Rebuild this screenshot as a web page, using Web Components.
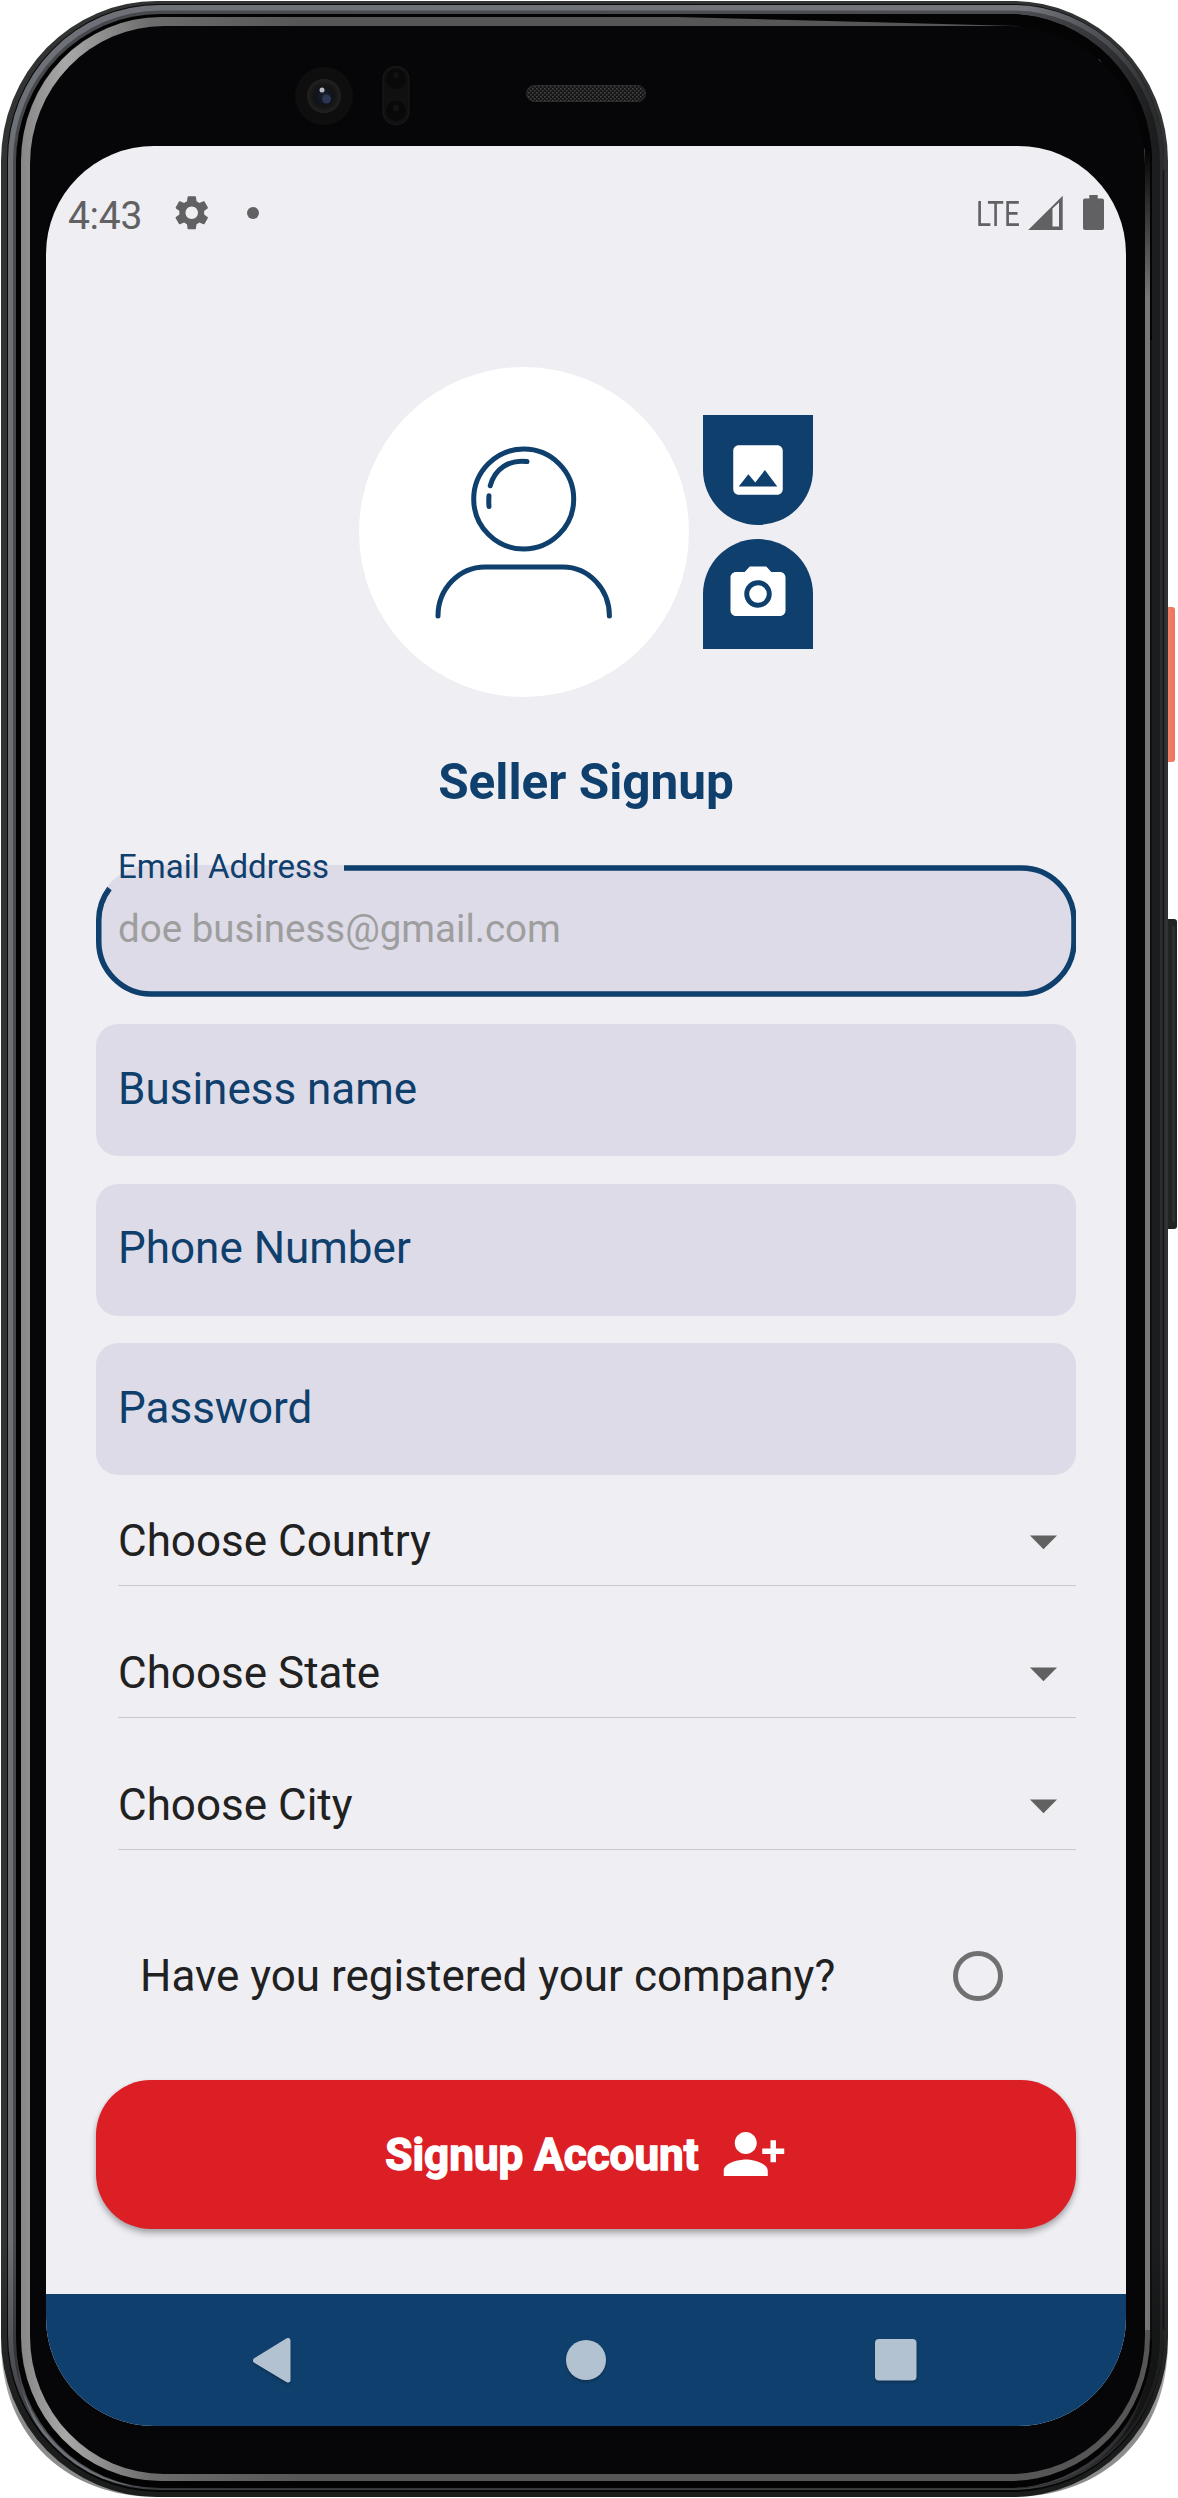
<!DOCTYPE html>
<html lang="en">
<head>
<meta charset="utf-8">
<title>Seller Signup</title>
<style>
html,body{margin:0;padding:0;background:#fff}
body{width:1178px;height:2498px;overflow:hidden;font-family:Roboto,"Liberation Sans",sans-serif}
</style>
</head>
<body>
<phone-frame>
  <status-bar time="4:43" network="LTE"></status-bar>
  <seller-form>
    <avatar-picker></avatar-picker>
    <form-title>Seller Signup</form-title>
    <text-field focused label="Email Address" style="--label-ls:0;--hint-ls:0">doe business@gmail.com</text-field>
    <text-field label="Business name"></text-field>
    <text-field label="Phone Number"></text-field>
    <text-field label="Password"></text-field>
    <select-group>
      <select-row>Choose Country</select-row>
      <select-row>Choose State</select-row>
      <select-row>Choose City</select-row>
    </select-group>
    <radio-row>Have you registered your company?</radio-row>
    <signup-button>Signup Account</signup-button>
  </seller-form>
  <nav-bar></nav-bar>
</phone-frame>
<script>
const define = (name, render) => customElements.define(name, class extends HTMLElement {
  connectedCallback() {
    if (this.shadowRoot) return;
    this.attachShadow({ mode: 'open' }).innerHTML = render(this);
  }
});

define('phone-frame', () => `
<style>
:host{display:grid;width:1178px;height:2498px}
.bezel,.screen{grid-area:1/1}
.bezel{display:block}
.screen{margin:146px 52px 72px 46px;background:#efeef3;border-radius:108px;overflow:hidden;display:flex;flex-direction:column}
</style>
<svg class="bezel" width="1178" height="2498" viewBox="0 0 1178 2498">
  <defs>
    <linearGradient id="steel" x1="0" x2="1" y1="0" y2="0">
      <stop offset="0" stop-color="#6d7077"/><stop offset=".88" stop-color="#74757c"/><stop offset=".96" stop-color="#46474b"/><stop offset=".99" stop-color="#2c2d2f"/>
    </linearGradient>
    <linearGradient id="shine" gradientUnits="userSpaceOnUse" x1="0" x2="300" y1="0" y2="0">
      <stop offset="0" stop-color="#787878"/><stop offset=".22" stop-color="#a8a8a8"/><stop offset=".5" stop-color="#6c6c6c"/><stop offset="1" stop-color="#565656"/>
    </linearGradient>
    <linearGradient id="side" gradientUnits="userSpaceOnUse" x1="0" x2="0" y1="26" y2="2498">
      <stop offset="0" stop-color="#a8a8a8" stop-opacity="0"/><stop offset=".05" stop-color="#777" stop-opacity="0"/><stop offset=".11" stop-color="#777"/><stop offset="1" stop-color="#777"/>
    </linearGradient>
    <linearGradient id="coral" x1="0" x2="1" y1="0" y2="0">
      <stop offset="0" stop-color="#e0593f"/><stop offset=".4" stop-color="#f48068"/><stop offset="1" stop-color="#f0725a"/>
    </linearGradient>
    <pattern id="mesh" width="4" height="4" patternUnits="userSpaceOnUse">
      <rect width="4" height="4" fill="#161616"/><rect width="1.6" height="1.6" fill="#444"/><rect x="2" y="2" width="1.6" height="1.6" fill="#3c3c3c"/>
    </pattern>
    <radialGradient id="lens"><stop offset="0" stop-color="#1c2130"/><stop offset=".5" stop-color="#10131c"/><stop offset=".62" stop-color="#141414"/><stop offset="1" stop-color="#222"/></radialGradient>
    <linearGradient id="fade" gradientUnits="userSpaceOnUse" x1="0" x2="0" y1="2240" y2="2420"><stop offset="0" stop-color="#000" stop-opacity="0"/><stop offset="1" stop-color="#000" stop-opacity=".45"/></linearGradient>
    <clipPath id="glass"><rect x="16" y="14" width="1136" height="2474" rx="144" ry="148"/></clipPath>
  </defs>
  <rect x="1164" y="607" width="11" height="155" rx="3" fill="url(#coral)"/>
  <rect x="1164" y="919" width="13" height="310" rx="3" fill="#232323"/>
  <rect x="1172" y="926" width="3" height="296" rx="1" fill="#303030"/>
  <rect x="1" y="1" width="1167" height="2496" rx="156" ry="160" fill="#313433"/>
  <rect x="7" y="4" width="1157" height="2488" rx="152" ry="156" fill="#0a0a0b"/>
  <rect x="8" y="5" width="1156" height="2485" rx="151" ry="155" fill="url(#steel)"/>
  <rect x="13" y="10.5" width="1147" height="2478" rx="147" ry="151" fill="#000" opacity=".35"/>
  <rect x="16" y="14" width="1136" height="2474" rx="144" ry="148" fill="#030303"/>
  <rect x="21" y="17" width="1129" height="2464" rx="140" ry="144" fill="url(#shine)"/>
  <g clip-path="url(#glass)">
    <path d="M560 14L1018 26L1100 60L1145 150V330H1160V10H560Z" fill="#040405"/>
    <path d="M1147.500 130V2330" stroke="url(#side)" stroke-width="5"/>
    <path d="M1151 340V2340" stroke="#101011" stroke-width="2"/>
  </g>
  <path d="M1163.500 170V2330" stroke="#161617" stroke-width="1.500"/>
  <rect x="30" y="26" width="1115" height="2448" rx="134" ry="138" fill="#060608"/>
  <path d="M1 2240V2341C1 2440 70 2497 157 2497H1012C1100 2497 1168 2440 1168 2341V2240H1151V2337C1151 2430 1095 2488 1008 2488H160C80 2488 16 2440 16 2340V2240Z" fill="url(#fade)"/>
  <circle cx="324" cy="96" r="29" fill="#0e0e0f"/>
  <circle cx="324" cy="96" r="17" fill="url(#lens)"/>
  <circle cx="326.500" cy="99" r="4.500" fill="#2b3554"/>
  <circle cx="322" cy="90" r="2.500" fill="#b9bac0"/>
  <rect x="383" y="66.500" width="26" height="58" rx="13" fill="#101011" stroke="#161617" stroke-width="1.500"/>
  <circle cx="396" cy="79" r="10" fill="#09090a"/><circle cx="396" cy="111" r="10" fill="#09090a"/>
  <circle cx="396" cy="75" r="3" fill="#121213"/><circle cx="396" cy="108" r="3" fill="#141415"/>
  <rect x="526.500" y="85.500" width="119" height="16" rx="8" fill="url(#mesh)" stroke="#2c2c2c"/>
</svg>
<div class="screen"><slot></slot></div>`);

define('status-bar', el => `
<style>
:host{display:flex;height:134px;align-items:center;justify-content:space-between;box-sizing:border-box;padding:0 22px 0 22px;color:#616163}
div{display:flex;align-items:center}
.time{font-size:39px;line-height:46px;width:85px;padding-top:5px;letter-spacing:-.3px}
.gear{margin-left:18px}
.dot{width:12px;height:12px;border-radius:50%;background:#616163;margin-left:34px}
.net{font-size:34.500px;line-height:40px;width:50px;margin-right:2px;padding-top:2px}
.net span{display:block;transform:scaleX(.81);transform-origin:0 50%}
svg{display:block}
</style>
<div><span class="time">${el.getAttribute('time')}</span>
<svg class="gear" width="41.500" height="41.500" viewBox="0 0 24 24"><path fill="#616163" d="M19.140 12.940c.040-.300.060-.610.060-.940 0-.320-.020-.640-.070-.940l2.030-1.580c.180-.140.230-.410.120-.610l-1.920-3.320c-.120-.220-.370-.290-.590-.220l-2.390.960c-.500-.380-1.030-.700-1.620-.940l-.360-2.540c-.040-.240-.240-.410-.480-.410h-3.840c-.240 0-.430.170-.470.410l-.360 2.540c-.590.240-1.130.570-1.620.940l-2.390-.960c-.220-.080-.470 0-.590.220L2.740 8.870c-.120.210-.080.470.120.610l2.030 1.580c-.050.300-.090.630-.090.940s.020.640.070.940l-2.030 1.580c-.180.140-.230.410-.120.610l1.920 3.320c.120.220.370.290.590.220l2.390-.960c.500.380 1.030.700 1.620.940l.360 2.540c.050.240.240.410.480.410h3.840c.240 0 .440-.170.470-.410l.360-2.540c.590-.240 1.130-.560 1.620-.940l2.390.960c.220.080.470 0 .590-.220l1.920-3.320c.120-.220.070-.470-.120-.610l-2.010-1.580zM12 15.600c-1.980 0-3.600-1.620-3.600-3.600s1.620-3.600 3.600-3.600 3.600 1.620 3.600 3.600-1.620 3.600-3.600 3.600z"/></svg>
<span class="dot"></span></div>
<div><span class="net"><span>${el.getAttribute('network')}</span></span>
<svg width="76" height="36" viewBox="0 0 76 36"><g fill="#616163"><path fill-rule="evenodd" d="M.200 35L34.700 .700V35ZM24.500 13.500V31.500H31V7.500Z"/><rect x="55" y="3.500" width="21" height="31.500" rx="2"/><rect x="61.300" y="0" width="8.400" height="5"/></g></svg></div>`);

define('seller-form', () => `
<style>:host{display:flex;flex-direction:column;flex:1;box-sizing:border-box;padding:87px 50px 0 50px}</style><slot></slot>`);

define('avatar-picker', () => `
<style>
:host{display:flex;justify-content:center;align-items:center;gap:13.500px;height:330px}
.face{width:330px;height:330px;border-radius:50%;background:#fff}
.side{display:flex;flex-direction:column;gap:13.750px}
.b{width:110.500px;height:110px;background:#0f3f6c;display:flex;align-items:center;justify-content:center}
.up{border-radius:0 0 55px 55px}.down{border-radius:55px 55px 0 0}
svg{display:block}
</style>
<div class="face"><svg width="330" height="330" viewBox="0 0 330 330" fill="none" stroke="#0f3f6c" stroke-width="5" stroke-linecap="round">
<circle cx="164.700" cy="132" r="50"/><path d="M168 94.600C150 92.500 136 101.500 131.200 118.800M130 128.800Q129.500 134 130 139.500M79 249A47 49 0 0 1 126 200H204A46.500 49 0 0 1 250.400 249"/></svg></div>
<div class="side">
<div class="b up"><svg width="66" height="66" viewBox="0 0 24 24"><path fill="#fff" d="M21 19V5c0-1.100-.900-2-2-2H5c-1.100 0-2 .900-2 2v14c0 1.100.900 2 2 2h14c1.100 0 2-.900 2-2zM8.500 13.500l2.500 3.010L14.500 12l4.500 6H5l3.500-4.500z"/></svg></div>
<div class="b down"><svg width="66" height="66" viewBox="0 0 24 24"><g fill="#fff"><circle cx="12" cy="12" r="3.200"/><path d="M9 2L7.170 4H4c-1.100 0-2 .900-2 2v12c0 1.100.900 2 2 2h16c1.100 0 2-.900 2-2V6c0-1.100-.900-2-2-2h-3.170L15 2H9zm3 15c-2.760 0-5-2.240-5-5s2.240-5 5-5 5 2.240 5 5-2.240 5-5 5z"/></g></svg></div>
</div>`);

define('form-title', () => `
<style>:host{display:flex;justify-content:center;align-items:center;box-sizing:border-box;height:167.500px;padding-top:2px;font-size:49.500px;font-weight:700;color:#0f3f6c}</style><slot></slot>`);

define('text-field', el => {
  const label = el.getAttribute('label');
  return el.hasAttribute('focused') ? `
<style>
:host{display:flex;align-items:center;position:relative;height:132px;box-sizing:border-box;padding:0 22px 4px;margin-bottom:27.500px;border-radius:55px;background:#dddbe7;color:#9e9e9e;font-size:38.500px;letter-spacing:var(--hint-ls)}
svg{position:absolute;inset:0}
.label{position:absolute;left:22px;top:-18px;font-size:33px;line-height:40px;color:#0f3f6c;letter-spacing:var(--label-ls)}
</style>
<svg width="980" height="132" viewBox="0 0 980 132"><path fill="none" stroke="#0f3f6c" stroke-width="5.500" d="M248 3H925A52.500 52.500 0 0 1 978 55.500V76.500A52.500 52.500 0 0 1 925 129H55.250A52.500 52.500 0 0 1 2.750 76.500V55.500A52.500 52.500 0 0 1 13.500 23.500"/></svg>
<span class="label">${label}</span><slot></slot>` : `
<style>
:host{display:flex;align-items:center;height:132px;box-sizing:border-box;padding:0 22px 3px;border-radius:22px;background:#dddbe7;color:#0f3f6c;font-size:44px;margin-bottom:27.500px}
:host(:last-of-type){margin-bottom:0}
</style><span>${label}</span>`;
});

define('select-group', () => `<style>:host{display:flex;flex-direction:column;gap:42px;margin-top:21px;padding-left:22px}</style><slot></slot>`);
define('select-row', () => `
<style>:host{display:flex;align-items:center;justify-content:space-between;height:90px;box-sizing:border-box;border-bottom:1.500px solid #c9c8cc;font-size:44px;color:#212121}svg{display:block}</style>
<span><slot></slot></span><svg width="65" height="66" viewBox="0 0 24 24"><path d="M7 10l5 5 5-5z" fill="#616161"/></svg>`);

define('radio-row', () => `
<style>:host{display:flex;align-items:center;justify-content:space-between;height:230px;box-sizing:border-box;padding:21px 73px 0 44px;font-size:44px;color:#212121}
.o{width:50px;height:50px;box-sizing:border-box;border:5.500px solid #707071;border-radius:50%}</style>
<span><slot></slot></span><span class="o"></span>`);

define('signup-button', () => `
<style>:host{display:flex;align-items:center;justify-content:center;gap:22px;height:148.500px;border-radius:55px;background:#dc1e25;color:#fff;font-size:44px;font-weight:700;box-shadow:0 5px 6px rgba(0,0,0,.22),0 2px 5px rgba(0,0,0,.14)}
span{-webkit-text-stroke:1.400px #fff;padding-top:1px}svg{display:block}</style>
<span><slot></slot></span><svg width="66" height="66" viewBox="0 0 24 24"><path fill="#fff" d="M13 8c0-2.210-1.790-4-4-4S5 5.790 5 8s1.790 4 4 4 4-1.790 4-4zm2 2v2h3v3h2v-3h3v-2h-3V7h-2v3h-3zM1 18v2h16v-2c0-2.660-5.330-4-8-4s-8 1.340-8 4z"/></svg>`);

define('nav-bar', () => `
<style>:host{display:flex;align-items:center;justify-content:space-between;height:132px;box-sizing:border-box;padding:0 209px 0 206px;background:#0f3f6c}
svg{display:block;filter:drop-shadow(0 2px 1px rgba(0,0,0,.2))}
.home{margin-left:4px}</style>
<svg width="40" height="46" viewBox="0 0 40 46"><path fill="#b3c2d1" stroke="#b3c2d1" stroke-width="5" stroke-linejoin="round" d="M3.500 23.500L36 3.500V43Z"/></svg>
<svg class="home" width="42" height="42" viewBox="0 0 42 42"><circle cx="21" cy="21" r="20" fill="#b3c2d1"/></svg>
<svg width="42" height="42" viewBox="0 0 42 42"><rect width="41.500" height="41.500" rx="4" fill="#b3c2d1"/></svg>`);
</script>
</body>
</html>
